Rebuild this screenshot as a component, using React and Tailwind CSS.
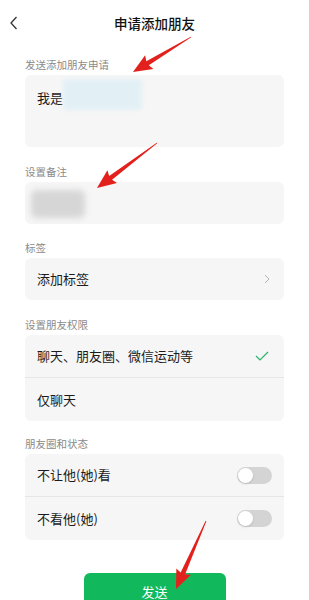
import React from 'react';

const font = { fontFamily: '"Noto Sans CJK SC", "Noto Sans", sans-serif' };

// tapered red arrow, drawn from tail to tip
const arrowPoints = (tx, ty, hx, hy) => {
    const dx = hx - tx, dy = hy - ty;
    const len = Math.hypot(dx, dy);
    const ux = dx / len, uy = dy / len;
    const px = -uy, py = ux;
    const headLen = 17, headW = 8, shaftW = 2.4;
    const bx = hx - ux * headLen, by = hy - uy * headLen;
    const pts = [
        [tx + px * 0.4, ty + py * 0.4],
        [bx + px * shaftW, by + py * shaftW],
        [bx + px * headW - ux * 2, by + py * headW - uy * 2],
        [hx, hy],
        [bx - px * headW - ux * 2, by - py * headW - uy * 2],
        [bx - px * shaftW, by - py * shaftW],
        [tx - px * 0.4, ty - py * 0.4],
    ];
    return pts.map(p => p.join(',')).join(' ');
};

const Arrows = () => (
    <svg className="absolute left-0 top-0 pointer-events-none" width="309" height="600" viewBox="0 0 309 600">
        <polygon points={arrowPoints(191, 37, 133, 72)} fill="#e3211c" />
        <polygon points={arrowPoints(157, 143, 97, 188)} fill="#e3211c" />
        <polygon points={arrowPoints(206, 521, 176, 589)} fill="#e3211c" />
    </svg>
);

const Label = ({ children, className = '' }) => (
    <div className={`text-[10.5px] leading-4 text-[#8a8a8a] mb-[2px] ${className}`}>{children}</div>
);

const Toggle = () => (
    <div className="w-[35px] h-[17px] rounded-full bg-[#d4d4d4] p-[1px] flex items-center">
        <div className="w-[15px] h-[15px] rounded-full bg-white shadow-sm" />
    </div>
);

const Row = ({ children, right, border }) => (
    <div className={`h-[43px] flex items-center justify-between pl-3 pr-3 ${border ? 'border-b border-[#e6e6e6]' : ''}`}>
        <span className="text-[13px] text-[#1b1b1b]">{children}</span>
        {right}
    </div>
);

export default function App() {
    return (
        <div className="relative w-[309px] h-[600px] bg-white overflow-hidden" style={font}>
            <div className="relative h-[46px] flex items-center justify-center">
                <svg className="absolute left-[9px] top-[16px]" width="10" height="14" viewBox="0 0 10 14">
                    <path d="M7.5 1 L2 7 L7.5 13" fill="none" stroke="#333" strokeWidth="1.3" />
                </svg>
                <span className="text-[13.5px] font-medium text-[#111]">申请添加朋友</span>
            </div>

            <div className="px-[25px]">
                <Label className="mt-[11px]">发送添加朋友申请</Label>
                <div className="h-[72px] rounded-md bg-[#f6f6f6] pl-3 pt-[4px] flex items-start">
                    <span className="text-[13px] text-[#1b1b1b] mt-[9px]">我是</span>
                    <div className="w-[79px] h-[31px] bg-[#e2f0f6] blur-[2px] rounded-sm" />
                </div>

                <Label className="mt-[17px]">设置备注</Label>
                <div className="h-[42px] rounded-md bg-[#f6f6f6] pl-[6px] pt-[8px]">
                    <div className="w-[54px] h-[28px] bg-[#d6d6d6] blur-[3px] rounded-md" />
                </div>

                <Label className="mt-[16px]">标签</Label>
                <div className="rounded-md bg-[#f6f6f6]">
                    <div className="h-[42px] flex items-center justify-between pl-3 pr-[14px]">
                        <span className="text-[13px] text-[#1b1b1b]">添加标签</span>
                        <svg width="6" height="10" viewBox="0 0 6 10">
                            <path d="M1 1 L5 5 L1 9" fill="none" stroke="#b5b5b5" strokeWidth="1" />
                        </svg>
                    </div>
                </div>

                <Label className="mt-[17px]">设置朋友权限</Label>
                <div className="rounded-md bg-[#f6f6f6]">
                    <Row border right={
                        <svg width="14" height="10" viewBox="0 0 14 10" className="mr-[3px]">
                            <path d="M1 5 L5 9 L13 1" fill="none" stroke="#2bb36b" strokeWidth="1.2" />
                        </svg>
                    }>聊天、朋友圈、微信运动等</Row>
                    <Row>仅聊天</Row>
                </div>

                <Label className="mt-[15px]">朋友圈和状态</Label>
                <div className="rounded-md bg-[#f6f6f6]">
                    <Row border right={<Toggle />}>不让他(她)看</Row>
                    <Row right={<Toggle />}>不看他(她)</Row>
                </div>

                <div className="flex justify-center mt-[33px]">
                    <button className="w-[142px] h-[38px] rounded-md bg-[#11b95c] text-white text-[13px]">发送</button>
                </div>
            </div>

            <Arrows />
        </div>
    );
}
